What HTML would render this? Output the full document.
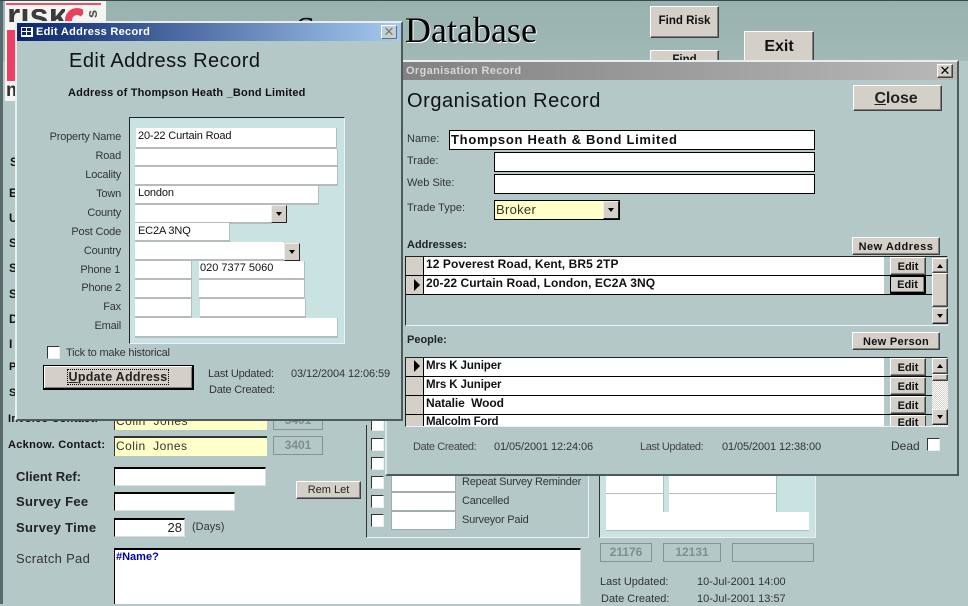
<!DOCTYPE html>
<html><head><meta charset="utf-8"><style>
html,body{margin:0;padding:0}
body{width:968px;height:604px;overflow:hidden;position:relative;background:#b5c8c8;font-family:"Liberation Sans",sans-serif;font-size:12px;color:#222}
div{position:absolute;box-sizing:border-box;white-space:nowrap}
.l{text-align:right;color:#333;line-height:14px;height:14px;font-size:11px;letter-spacing:-.2px}
.t{color:#333;line-height:14px;height:14px;font-size:11px}
.n{letter-spacing:-.2px}
.b{font-weight:bold;color:#111}
.f{background:#fff;border-right:1px solid #b4bcbc;border-bottom:2px solid #b4bcbc;line-height:17px;padding-left:3px;color:#111;font-size:11px;letter-spacing:-.15px}
.s{background:#fff;border:1px solid #000;border-right-color:#ddd;border-bottom-color:#ddd;border-top-width:2px}
.btn{background:#d4d0c8;border:1px solid;border-color:#fff #404040 #404040 #fff;text-align:center;font-weight:bold;color:#111;box-shadow:inset -1px -1px 0 #808080}
.dd{background:#d4d0c8;border:1px solid;border-color:#eee #222 #222 #eee}
.dd:after,.up:after{content:"";position:absolute;left:50%;top:50%;margin:-2px 0 0 -3px;border:3px solid transparent;border-top:4px solid #000;border-bottom:0}
.up:after{border-top:0;border-bottom:4px solid #000}
.cb{background:#fff;border:1px solid;border-color:#333 #eee #eee #333;width:13px;height:13px}
.g{border:1px solid #849494;color:#7f8e8e;font-weight:bold;text-align:center;font-size:12px}
.row{background:#fff;border-bottom:1px solid #000;font-weight:bold;color:#111;font-size:12px;letter-spacing:.08px;left:423px;width:461px;height:19px;line-height:15px;padding-left:2px;border-left:1px solid #000}
.sel{background:#d4d0c8;left:406px;width:17px;height:19px;border-bottom:1px solid #000}
.sep{left:884px;width:48px;height:1px;background:#000}
.arrow{width:0;height:0;border-left:6px solid #000;border-top:6px solid transparent;border-bottom:6px solid transparent}
</style></head><body>

<!-- Background form header -->
<div style="left:0;top:0;width:968px;height:1px;background:#36494e"></div>
<div style="left:0;top:1px;width:968px;height:60px;background:linear-gradient(#98b2ae,#a2b9b7)"></div>
<div style="left:0;top:1px;width:3px;height:603px;background:#59696b"></div>

<!-- Logo -->
<div style="left:5px;top:1px;width:101px;height:100px;background:#f4f4f0"></div>
<div style="left:6px;top:3px;width:95px;height:2px;background:#e4536f"></div>
<div style="left:7px;top:30px;width:10px;height:51px;background:#ec3f63"></div>
<div style="left:7px;top:9px;width:58px;height:13px;overflow:hidden"><div style="left:0;top:-10px;font:bold 34px/34px 'Liberation Sans',sans-serif;color:#3b3b3b">risk</div></div>
<div style="left:65px;top:8px;width:18px;height:14px;overflow:hidden"><div style="left:0;top:0;width:24px;height:24px;border-radius:50%;border:7px solid #e9405f;border-right-color:transparent"></div></div>
<div style="left:89px;top:7px;font:bold 15px/14px 'Liberation Sans',sans-serif;color:#555;transform:rotate(-90deg)">s</div>
<div style="left:6px;top:81px;font:bold 19px/19px 'Liberation Sans',sans-serif;color:#333">m</div>

<!-- Title -->
<div style="left:296px;top:8px;font:35px/44px 'Liberation Serif',serif;color:#111">S</div>
<div style="left:405px;top:8px;font:36px/44px 'Liberation Serif',serif;color:#000;text-shadow:1px 1px 0 #fff">Database</div>

<!-- Top buttons -->
<div class="btn" style="left:650px;top:6px;width:69px;height:32px;line-height:28px;font-size:11.5px">Find Risk</div>
<div class="btn" style="left:650px;top:50px;width:69px;height:30px;line-height:18px;font-size:11.5px">Find</div>
<div class="btn" style="left:744px;top:31px;width:70px;height:40px;line-height:29px;font-size:16px;font-weight:bold">Exit</div>

<!-- Left background labels -->
<div class="b" style="left:10px;top:155px">S</div>
<div class="b" style="left:9px;top:186px">E</div>
<div class="b" style="left:9px;top:211px">U</div>
<div class="b" style="left:9px;top:236px">S</div>
<div class="b" style="left:9px;top:261px">S</div>
<div class="b" style="left:9px;top:287px">S</div>
<div class="b" style="left:9px;top:312px">D</div>
<div class="b" style="left:9px;top:337px">I</div>
<div class="b" style="left:9px;top:361px;font-size:11px">P</div>
<div class="b" style="left:9px;top:387px;font-size:11px">S</div>

<div class="b" style="left:8px;top:413px;font-size:11px;line-height:13px;letter-spacing:.3px">Invoice Contact:</div>
<div style="left:114px;top:410px;width:153px;height:20px;background:#ffffc8;border-top:1px solid #333;border-left:1px solid #333;padding-left:1px;line-height:20px;color:#333;letter-spacing:.5px">Colin&nbsp; Jones</div>
<div class="g" style="left:273px;top:410px;width:50px;height:20px;line-height:18px">3401</div>
<div class="b" style="left:8px;top:439px;font-size:11px;line-height:13px;letter-spacing:.3px">Acknow. Contact:</div>
<div style="left:114px;top:436px;width:153px;height:20px;background:#ffffc8;border-top:2px solid #333;border-left:1px solid #333;padding-left:1px;line-height:17px;color:#333;letter-spacing:.45px">Colin&nbsp; Jones</div>
<div class="g" style="left:273px;top:436px;width:50px;height:19px;line-height:17px">3401</div>

<div class="b" style="left:16px;top:469px;font-size:13px;line-height:15px;color:#222">Client Ref:</div>
<div class="s" style="left:114px;top:467px;width:152px;height:19px"></div>
<div class="b" style="left:16px;top:494px;font-size:13px;line-height:15px;color:#222;letter-spacing:.3px">Survey Fee</div>
<div class="s" style="left:114px;top:492px;width:121px;height:19px"></div>
<div class="b" style="left:16px;top:520px;font-size:13px;line-height:15px;color:#222;letter-spacing:.3px">Survey Time</div>
<div class="s" style="left:114px;top:518px;width:71px;height:19px;text-align:right;padding-right:2px;line-height:15px;color:#222;font-size:13px">28</div>
<div class="t" style="left:192px;top:520px">(Days)</div>
<div class="btn" style="left:296px;top:481px;width:65px;height:18px;line-height:17px;font-weight:normal;font-size:11px;color:#222">Rem Let</div>
<div class="t" style="left:16px;top:551px;font-size:13px;line-height:15px;height:15px;letter-spacing:.3px">Scratch Pad</div>
<div class="s" style="left:114px;top:548px;width:467px;height:56px;color:#0000b0;font-weight:bold;font-size:11px;line-height:14px;padding-left:1px;border-bottom:0">#Name?</div>

<!-- Right-of-centre checkbox group -->
<div style="left:366px;top:425px;width:223px;height:113px;border-left:1px solid #333;border-bottom:1px solid #eef;border-right:1px solid #eef"></div>
<div class="cb" style="left:371px;top:418px"></div>
<div class="cb" style="left:371px;top:438px"></div>
<div class="cb" style="left:371px;top:457px"></div>
<div class="cb" style="left:371px;top:476px"></div>
<div class="cb" style="left:371px;top:495px"></div>
<div class="cb" style="left:371px;top:514px"></div>
<div style="left:391px;top:473px;width:65px;height:19px;background:#fff;border:1px solid #a3adad"></div>
<div style="left:391px;top:492px;width:65px;height:19px;background:#fff;border:1px solid #a3adad"></div>
<div style="left:391px;top:511px;width:65px;height:19px;background:#fff;border:1px solid #a3adad"></div>
<div class="t n" style="left:462px;top:475px">Repeat Survey Reminder</div>
<div class="t n" style="left:462px;top:494px">Cancelled</div>
<div class="t n" style="left:462px;top:513px">Surveyor Paid</div>

<!-- Right address panel (behind) -->
<div style="left:599px;top:470px;width:217px;height:68px;background:#c9e2e2;border-left:1px solid #333;border-right:1px solid #eee;border-bottom:1px solid #eee"></div>
<div style="left:606px;top:474px;width:58px;height:20px;background:#fff;border-bottom:1px solid #b4bcbc;border-right:1px solid #b4bcbc"></div>
<div style="left:606px;top:494px;width:58px;height:19px;background:#fff;border-bottom:1px solid #b4bcbc;border-right:1px solid #b4bcbc"></div>
<div style="left:669px;top:474px;width:108px;height:20px;background:#fff;border-bottom:1px solid #b4bcbc;border-right:1px solid #b4bcbc"></div>
<div style="left:669px;top:494px;width:108px;height:19px;background:#fff;border-bottom:1px solid #b4bcbc;border-right:1px solid #b4bcbc"></div>
<div style="left:606px;top:512px;width:203px;height:19px;background:#fff;border-bottom:1px solid #b4bcbc"></div>
<div class="g" style="left:600px;top:543px;width:52px;height:19px;line-height:16px">21176</div>
<div class="g" style="left:663px;top:543px;width:58px;height:19px;line-height:16px">12131</div>
<div class="g" style="left:732px;top:543px;width:82px;height:19px"></div>
<div class="t" style="left:600px;top:575px">Last Updated:</div>
<div class="t" style="left:697px;top:575px">10-Jul-2001 14:00</div>
<div class="t" style="left:601px;top:592px">Date Created:</div>
<div class="t" style="left:697px;top:592px">10-Jul-2001 13:57</div>

<!-- Organisation Record window -->
<div style="left:385px;top:60px;width:574px;height:416px;background:#b5c8c8;border:2px solid;border-color:#e8eeee #4c5a5c #4c5a5c #dde6e6"></div>
<div style="left:387px;top:62px;width:570px;height:18px;background:linear-gradient(90deg,#808080,#b8b8b8)"></div>
<div class="b" style="left:406px;top:64px;color:#d4d8d8;font-size:11px;line-height:14px;letter-spacing:.35px">Organisation Record</div>
<div class="btn" style="left:937px;top:64px;width:16px;height:14px;font:13px/11px 'Liberation Sans',sans-serif;color:#000">✕</div>
<div style="left:407px;top:89px;font-size:20px;line-height:24px;color:#111;letter-spacing:.55px">Organisation Record</div>
<div class="btn" style="left:853px;top:85px;width:89px;height:26px;line-height:26px;font-size:16px;color:#222;padding-right:3px;letter-spacing:-.1px"><u>C</u>lose</div>

<div class="t" style="left:407px;top:132px">Name:</div>
<div style="left:449px;top:130px;width:366px;height:20px;background:#fff;border:1px solid #000;font-weight:bold;font-size:13px;line-height:17px;padding-left:1px;letter-spacing:.72px;color:#111">Thompson Heath &amp; Bond Limited</div>
<div class="t" style="left:407px;top:154px">Trade:</div>
<div style="left:494px;top:152px;width:321px;height:20px;background:#fff;border:1px solid #000"></div>
<div class="t" style="left:407px;top:176px">Web Site:</div>
<div style="left:494px;top:174px;width:321px;height:20px;background:#fff;border:1px solid #000"></div>
<div class="t" style="left:407px;top:201px">Trade Type:</div>
<div style="left:494px;top:200px;width:126px;height:20px;background:#ffffc8;border:1px solid #000;line-height:18px;padding-left:1px;font-size:13px;color:#333;letter-spacing:.3px">Broker</div>
<div class="dd" style="left:603px;top:201px;width:16px;height:18px"></div>

<div class="b" style="left:407px;top:238px;font-size:11px;line-height:14px;color:#222">Addresses:</div>
<div class="btn" style="left:852px;top:237px;width:88px;height:18px;line-height:19px;font-size:11px;letter-spacing:.5px">New Address</div>

<!-- Address subform -->
<div style="left:405px;top:256px;width:543px;height:70px;border-left:1px solid #222;border-top:1px solid #222;border-right:1px solid #eef;border-bottom:1px solid #eef"></div>
<div class="sel" style="top:257px"></div>
<div class="sel" style="top:276px"></div>
<div class="arrow" style="left:414px;top:279px"></div>
<div class="row" style="top:257px">12 Poverest Road, Kent, BR5 2TP</div>
<div class="row" style="top:276px">20-22 Curtain Road, London, EC2A 3NQ</div>
<div class="sep" style="top:275px"></div>
<div class="sep" style="top:294px"></div>
<div class="btn" style="left:890px;top:257px;width:36px;height:18px;line-height:18px;font-size:11px">Edit</div>
<div class="btn" style="left:890px;top:276px;width:36px;height:18px;line-height:16px;font-size:11px;border:1px solid #000;border-bottom-width:2px;border-right-width:2px">Edit</div>
<div class="btn up" style="left:932px;top:258px;width:16px;height:15px"></div>
<div class="btn" style="left:932px;top:273px;width:16px;height:34px"></div>
<div class="btn dd" style="left:932px;top:308px;width:16px;height:16px"></div>

<div class="b" style="left:407px;top:333px;font-size:11px;line-height:14px;color:#222">People:</div>
<div class="btn" style="left:852px;top:332px;width:88px;height:18px;line-height:19px;font-size:11px;letter-spacing:.3px">New Person</div>

<!-- People subform -->
<div style="left:405px;top:357px;width:543px;height:70px;border-left:1px solid #222;border-top:1px solid #222;border-right:1px solid #eef;border-bottom:1px solid #eef"></div>
<div class="sel" style="top:358px"></div>
<div class="sel" style="top:377px"></div>
<div class="sel" style="top:396px"></div>
<div class="sel" style="top:415px;height:11px;border:0"></div>
<div class="arrow" style="left:414px;top:360px"></div>
<div class="row" style="top:358px;font-size:11.5px;line-height:16px;letter-spacing:-.1px">Mrs K Juniper</div>
<div class="row" style="top:377px;font-size:11.5px;line-height:16px;letter-spacing:-.1px">Mrs K Juniper</div>
<div class="row" style="top:396px;line-height:15px;letter-spacing:-.1px">Natalie&nbsp; Wood</div>
<div class="row" style="top:415px;height:11px;font-size:11.5px;line-height:14px;border-bottom:0;overflow:hidden;letter-spacing:-.2px">Malcolm Ford</div>
<div class="sep" style="top:376px"></div>
<div class="sep" style="top:395px"></div>
<div class="sep" style="top:414px"></div>
<div class="btn" style="left:890px;top:358px;width:36px;height:18px;line-height:18px;font-size:11px">Edit</div>
<div class="btn" style="left:890px;top:377px;width:36px;height:18px;line-height:18px;font-size:11px">Edit</div>
<div class="btn" style="left:890px;top:396px;width:36px;height:18px;line-height:18px;font-size:11px">Edit</div>
<div class="btn" style="left:890px;top:415px;width:36px;height:11px;line-height:14px;font-size:11px;overflow:hidden;border-bottom:0;box-shadow:none">Edit</div>
<div style="left:932px;top:358px;width:16px;height:68px;background:repeating-conic-gradient(#d4d0c8 0 25%,#fff 0 50%) 0 0/2px 2px"></div>
<div class="btn up" style="left:932px;top:358px;width:16px;height:16px"></div>
<div class="btn" style="left:932px;top:374px;width:16px;height:7px"></div>
<div class="btn dd" style="left:932px;top:409px;width:16px;height:16px"></div>

<div class="t" style="left:413px;top:440px;color:#444;letter-spacing:-.4px">Date Created:</div>
<div class="t" style="left:494px;top:440px;letter-spacing:-.1px">01/05/2001 12:24:06</div>
<div class="t" style="left:640px;top:440px;color:#444;letter-spacing:-.4px">Last Updated:</div>
<div class="t" style="left:722px;top:440px;letter-spacing:-.1px">01/05/2001 12:38:00</div>
<div class="t" style="left:891px;top:439px;font-size:12px">Dead</div>
<div class="cb" style="left:927px;top:438px"></div>

<!-- Edit Address window -->
<div style="left:15px;top:21px;width:388px;height:400px;background:#b5c8c8;border:2px solid;border-color:#e8eeee #4c5a5c #4c5a5c #e8eeee"></div>
<div style="left:17px;top:23px;width:384px;height:18px;background:linear-gradient(90deg,#0a246a,#a6caf0)"></div>
<div style="left:21px;top:27px;width:12px;height:10px;background:#fff;border:1px solid #fff"></div>
<div style="left:22px;top:28px;width:4px;height:3px;background:#0a246a"></div>
<div style="left:27px;top:28px;width:4px;height:3px;background:#0a246a"></div>
<div style="left:22px;top:32px;width:4px;height:3px;background:#0a246a"></div>
<div style="left:27px;top:32px;width:4px;height:3px;background:#0a246a"></div>
<div class="b" style="left:36px;top:25px;color:#fff;font-size:11px;line-height:14px;letter-spacing:.3px">Edit Address Record</div>
<div style="left:381px;top:25px;width:16px;height:14px;background:#c5d0d2;border:1px solid;border-color:#fff #607078 #607078 #fff;font:13px/11px 'Liberation Sans',sans-serif;text-align:center;color:#777">✕</div>
<div style="left:69px;top:49px;font-size:20px;line-height:25px;color:#111;letter-spacing:.48px">Edit Address Record</div>
<div class="b" style="left:68px;top:86px;font-size:11px;line-height:14px;letter-spacing:.2px">Address of Thompson Heath _Bond Limited</div>

<div style="left:129px;top:117px;width:216px;height:227px;background:#c9e2e2;border:1px solid;border-color:#222 #eef #eef #222"></div>

<div class="l" style="left:20px;top:130px;width:101px">Property Name</div>
<div class="l" style="left:20px;top:149px;width:101px">Road</div>
<div class="l" style="left:20px;top:168px;width:101px">Locality</div>
<div class="l" style="left:20px;top:187px;width:101px">Town</div>
<div class="l" style="left:20px;top:206px;width:101px">County</div>
<div class="l" style="left:20px;top:225px;width:101px">Post Code</div>
<div class="l" style="left:20px;top:244px;width:101px">Country</div>
<div class="l" style="left:20px;top:263px;width:100px">Phone 1</div>
<div class="l" style="left:20px;top:281px;width:101px">Phone 2</div>
<div class="l" style="left:20px;top:300px;width:101px">Fax</div>
<div class="l" style="left:20px;top:319px;width:101px">Email</div>

<div class="f" style="left:136px;top:128px;width:201px;height:21px;padding-left:2px;line-height:16px">20-22 Curtain Road</div>
<div class="f" style="left:135px;top:149px;width:203px;height:18px"></div>
<div class="f" style="left:135px;top:167px;width:203px;height:19px"></div>
<div class="f" style="left:135px;top:186px;width:184px;height:19px;line-height:15px">London</div>
<div class="f" style="left:135px;top:205px;width:137px;height:19px"></div>
<div class="dd" style="left:271px;top:205px;width:16px;height:18px"></div>
<div class="f" style="left:135px;top:223px;width:95px;height:19px;line-height:16px">EC2A 3NQ</div>
<div class="f" style="left:135px;top:242px;width:150px;height:19px"></div>
<div class="dd" style="left:284px;top:243px;width:16px;height:18px"></div>
<div class="f" style="left:135px;top:261px;width:57px;height:19px"></div>
<div class="f" style="left:199px;top:261px;width:106px;height:19px;padding-left:1px;line-height:15px;letter-spacing:0">020 7377 5060</div>
<div class="f" style="left:135px;top:280px;width:57px;height:19px"></div>
<div class="f" style="left:199px;top:280px;width:106px;height:19px"></div>
<div class="f" style="left:135px;top:299px;width:57px;height:19px"></div>
<div class="f" style="left:200px;top:299px;width:106px;height:19px"></div>
<div class="f" style="left:135px;top:318px;width:203px;height:20px"></div>

<div class="cb" style="left:47px;top:346px"></div>
<div class="t n" style="left:66px;top:346px">Tick to make historical</div>
<div class="btn" style="left:43px;top:365px;width:151px;height:25px;line-height:22px;font-size:12.5px;letter-spacing:.25px;border:1px solid #000;border-bottom-width:2px;border-right-width:2px;box-shadow:inset 1px 1px 0 #fff,inset -1px -1px 0 #808080;color:#222"><span style="outline:1px dotted #000;padding:0 1px"><u>U</u>pdate Address</span></div>
<div class="t n" style="left:208px;top:367px">Last Updated:</div>
<div class="t n" style="left:291px;top:367px;letter-spacing:-.1px">03/12/2004 12:06:59</div>
<div class="t n" style="left:209px;top:383px">Date Created:</div>

</body></html>
